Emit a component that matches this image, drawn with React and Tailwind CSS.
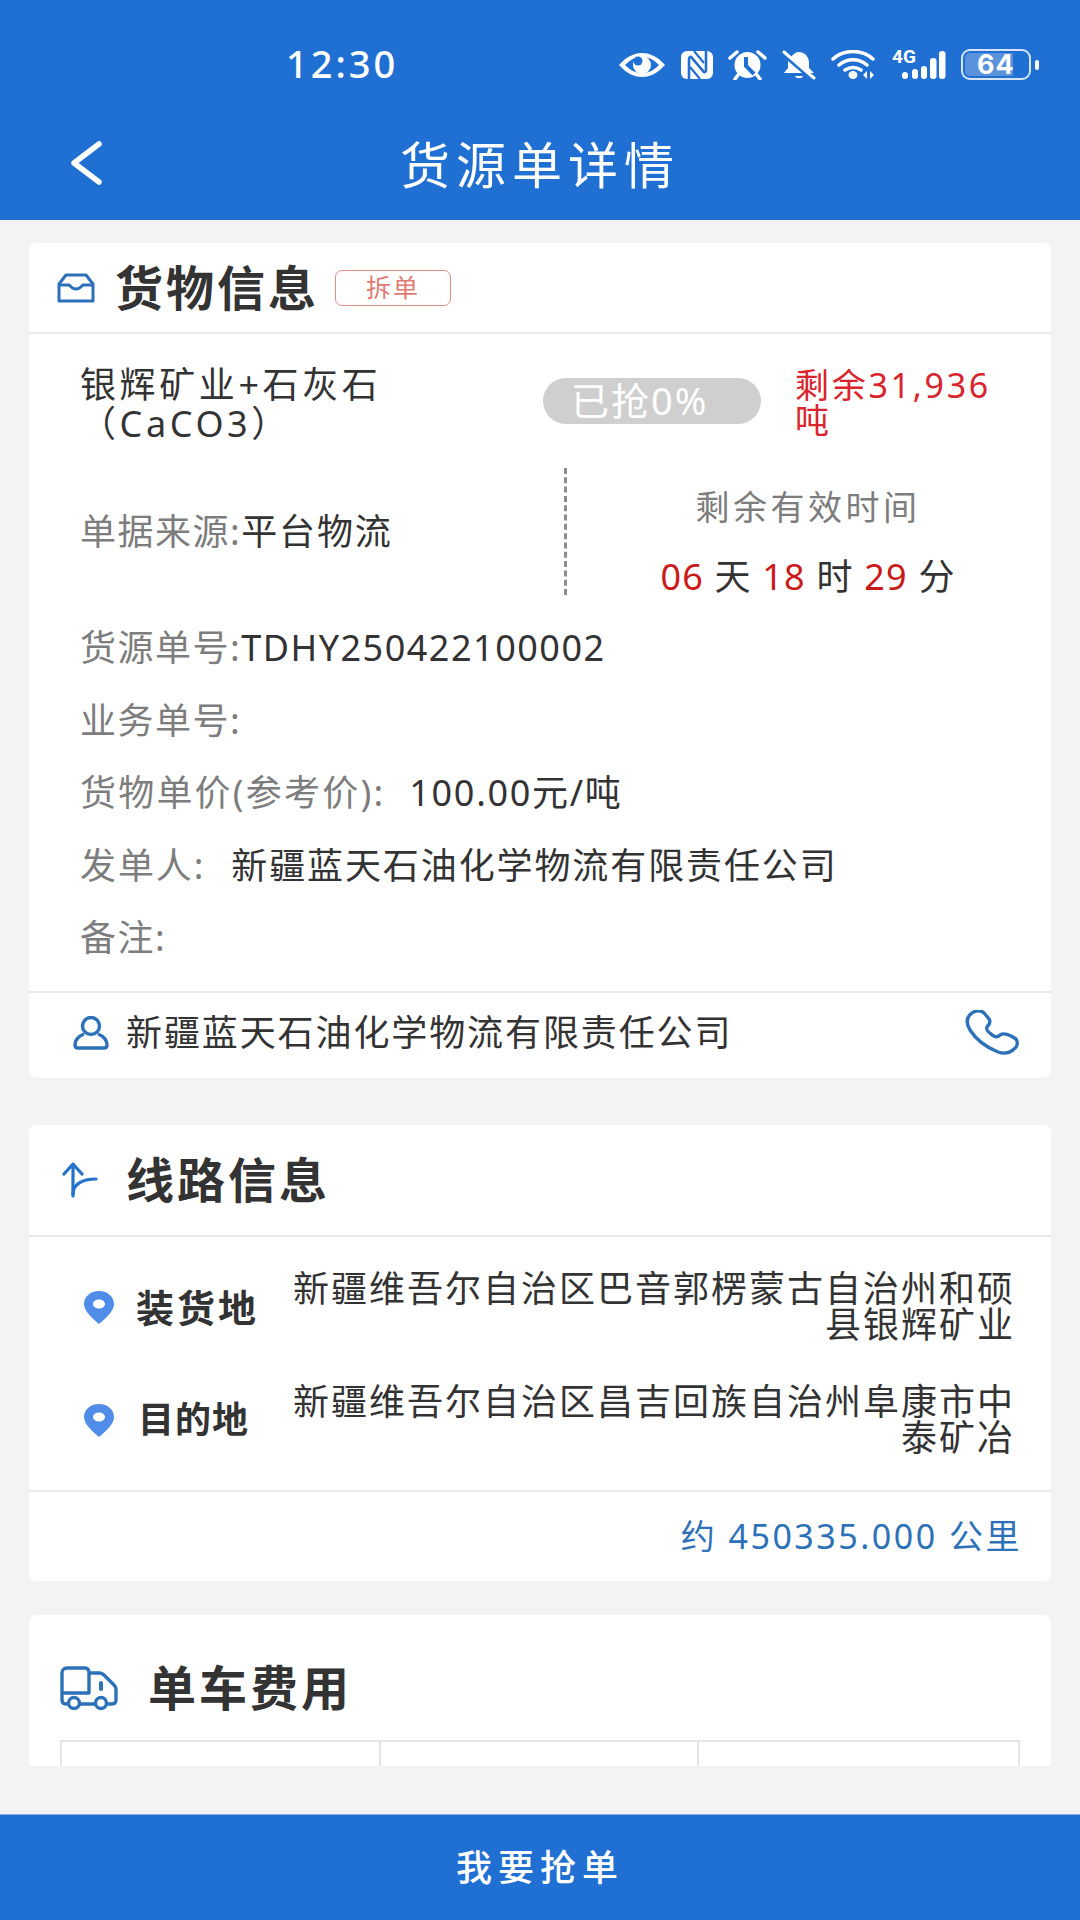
import React from 'react'

const cjk = { fontFamily: '"Noto Sans", "Noto Sans CJK SC", sans-serif' }

function Eye() {
  return (
    <svg width="48" height="26" viewBox="0 0 48 26">
      <path d="M1 13C9 4 17 1 24 1s15 3 23 12c-8 9-16 12-23 12S9 22 1 13Z" fill="#fff" />
      <path d="M7 13c6-6 11-8 17-8s11 2 17 8c-6 6-11 8-17 8S13 19 7 13Z" fill="#206fd2" />
      <circle cx="24" cy="13" r="9" fill="#fff" />
      <circle cx="20" cy="9" r="4.500" fill="#206fd2" />
    </svg>
  )
}

function Nfc() {
  return (
    <svg width="32" height="28" viewBox="0 0 32 28">
      <rect x="0" y="0" width="32" height="28" rx="6" fill="#fff" />
      <path d="M8 28V8c0-2 2-3 3-1l11 13c1 2 3 1 3-1V0" fill="none" stroke="#206fd2" strokeWidth="2.600" />
      <path d="M13 0l10 12M9 16l10 12" fill="none" stroke="#206fd2" strokeWidth="2.200" />
    </svg>
  )
}

function Alarm() {
  return (
    <svg width="39" height="30" viewBox="0 0 39 30">
      <circle cx="19.500" cy="15" r="13" fill="#fff" />
      <path d="M18 7v9l8 8" fill="none" stroke="#206fd2" strokeWidth="4" />
      <path d="M2 8l7-6M37 8l-7-6M7 29l3-4M32 29l-3-4" stroke="#fff" strokeWidth="3.500" strokeLinecap="round" />
    </svg>
  )
}

function BellOff() {
  return (
    <svg width="34" height="30" viewBox="0 0 34 30">
      <path d="M9 7c2-3 5-5 8-5 6 0 10 5 10 11v5l5 5H26ZM6 11l14 12H2l4-5Z" fill="#fff" />
      <path d="M13 26h8c-1 3-7 3-8 0Z" fill="#fff" />
      <path d="M2 2l30 26" stroke="#fff" strokeWidth="3" strokeLinecap="round" />
    </svg>
  )
}

function Wifi() {
  return (
    <svg width="46" height="30" viewBox="0 0 46 30">
      <path d="M2 9c11-10 29-10 40 0M8 15c8-7 20-7 28 0M14 20c5-3 11-3 16 0" fill="none" stroke="#fff" strokeWidth="3.500" strokeLinecap="round" />
      <ellipse cx="22" cy="25" rx="4.500" ry="4" fill="#fff" />
      <path d="M36 21v8l-4-4ZM39 21v8l4-4Z" fill="#fff" />
    </svg>
  )
}

function Signal() {
  return (
    <div className="relative w-[54px] h-[30px]">
      <span className="absolute left-0 top-[-2px] text-[19px] leading-[17px] font-bold text-white" style={{ fontFamily: 'Roboto' }}>4G</span>
      <svg width="54" height="30" viewBox="0 0 54 30" className="absolute inset-0">
        <rect x="10" y="22" width="6" height="7" rx="3" fill="#fff" />
        <rect x="20" y="19" width="6" height="10" rx="3" fill="#fff" />
        <rect x="29" y="16" width="6" height="13" rx="3" fill="#fff" />
        <rect x="38" y="8" width="6.500" height="21" rx="3" fill="#fff" />
        <rect x="47" y="1" width="6.500" height="28" rx="3" fill="#fff" />
      </svg>
    </div>
  )
}

function Battery() {
  return (
    <div className="flex items-center gap-[4px]">
      <div className="w-[70px] h-[31px] rounded-[9px] border-2 border-[#d6e4f6] p-[2px]">
        <div className="relative w-[48px] h-full rounded-l-[5px] bg-[#5a92dc]">
          <span className="absolute left-[12px] top-[-5px] text-[27px] leading-[34px] font-bold text-white tracking-[1px]" style={{ fontFamily: 'Inter' }}>64</span>
        </div>
      </div>
      <div className="w-[4px] h-[10px] rounded-full bg-white" />
    </div>
  )
}

function BoxIcon() {
  return (
    <svg width="38" height="30" viewBox="0 0 38 30" fill="none" stroke="#2d6fb8" strokeWidth="3" strokeLinejoin="round">
      <path d="M2 28V11L9 2h20l7 9v17Z" />
      <path d="M2 12h10c1 0 2 4 7 4s6-4 7-4h10" />
    </svg>
  )
}

function RouteIcon() {
  return (
    <svg width="36" height="36" viewBox="0 0 36 36" fill="none" stroke="#2472cc" strokeWidth="3.200" strokeLinecap="round" strokeLinejoin="round">
      <path d="M11 34V2M2 12l9-10 9 10" />
      <path d="M11 32c0-9 8-15 23-15" />
    </svg>
  )
}

function TruckIcon() {
  return (
    <svg width="58" height="44" viewBox="0 0 58 44" fill="none" stroke="#2d72b8" strokeWidth="3.400" strokeLinejoin="round">
      <path d="M7 38H6c-3 0-4-2-4-4V7c0-3 2-5 5-5h18c3 0 4 2 4 5v20H2" />
      <path d="M29 7h11c2 0 3 1 4 2l10 10c1 1 2 3 2 4v11c0 2-1 4-4 4h-4M18 38h17" />
      <circle cx="14" cy="37" r="5.500" />
      <circle cx="41" cy="37" r="5.500" />
      <path d="M41 17v6" strokeWidth="4" strokeLinecap="round" />
    </svg>
  )
}

function UserIcon() {
  return (
    <svg width="36" height="34" viewBox="0 0 36 34" fill="none" stroke="#2d72b8" strokeWidth="3.400">
      <circle cx="18" cy="10" r="8.500" />
      <path d="M11 18C6 20 2 24 2 29c0 2 1 3 3 3h26c2 0 3-1 3-3 0-5-4-9-9-11" strokeLinejoin="round" />
    </svg>
  )
}

function PhoneIcon() {
  return (
    <svg width="56" height="46" viewBox="0 0 56 46" fill="none" stroke="#2d72b8" strokeWidth="3.400" strokeLinejoin="round">
      <path d="M8 3c4-3 10-3 13 1l4 5c2 3 0 6-2 8-1 2 1 5 4 7 3 3 6 4 9 1 3-2 7-1 11 1l5 3c2 3 2 7-2 10-4 4-10 5-16 3C24 38 13 31 6 20 2 13 2 7 8 3Z" />
    </svg>
  )
}

function PinIcon() {
  return (
    <svg width="32" height="33" viewBox="0 0 32 33" className="shrink-0">
      <path d="M16 0c9 0 15 6 15 13 0 7-7 13-15 20C8 26 1 20 1 13 1 6 7 0 16 0Z" fill="#4f8de8" />
      <ellipse cx="16" cy="13" rx="6" ry="4.500" fill="#fff" />
    </svg>
  )
}

function InfoRow({ label, value, valueClass = '' }) {
  return (
    <div className="flex text-[36px] leading-[40px] tracking-[1.500px]">
      <span className="text-[#7d7d7d]">{label}</span>
      <span className={`text-[#333333] ${valueClass}`}>{value}</span>
    </div>
  )
}

function CardTitle({ icon, title, gap, height, children }) {
  return (
    <div className={`flex items-center border-b-2 border-[#e8e8e8] ${height}`}>
      {icon}
      <h2 className={`text-[48px] leading-[56px] font-bold tracking-[3px] text-[#333333] ${gap}`}>{title}</h2>
      {children}
    </div>
  )
}

export default function App() {
  return (
    <div className="w-[1080px] h-[1920px] flex flex-col bg-[#f3f3f3]" style={cjk}>
      {/* Header */}
      <header className="h-[220px] bg-[#206fd2] shrink-0 flex flex-col text-white">
        <div className="h-[100px] flex items-end pb-[15px] pl-[286px] pr-[41px] justify-between">
          <span className="text-[38px] leading-[44px] font-medium tracking-[3px]">12:30</span>
          <div className="flex items-center gap-[15px] pb-[5px]">
            <Eye />
            <Nfc />
            <Alarm />
            <BellOff />
            <Wifi />
            <Signal />
            <Battery />
          </div>
        </div>
        <div className="relative flex-1 flex items-center justify-center pt-[10px]">
          <svg width="36" height="44" viewBox="0 0 36 44" className="absolute left-[68px] top-[41px]" fill="none" stroke="#fff" strokeWidth="5.500" strokeLinecap="round" strokeLinejoin="round">
            <path d="M31 3 6 22l25 19" />
          </svg>
          <h1 className="text-[50px] leading-[60px] tracking-[6px] font-normal">货源单详情</h1>
        </div>
      </header>

      {/* Scrollable content */}
      <main className="h-[1546px] shrink-0 overflow-hidden px-[29px] pt-[23px]">
        {/* 货物信息 */}
        <section className="bg-white rounded-[8px] h-[835px] flex flex-col">
          <CardTitle icon={<span className="ml-[28px] flex"><BoxIcon /></span>} title="货物信息" gap="ml-[20px]" height="h-[91px]">
            <span className="ml-[16px] w-[116px] h-[36px] rounded-[7px] border border-[#dd8d88] flex items-center justify-center text-[25px] tracking-[2px] text-[#e07a73]">拆单</span>
          </CardTitle>

          <div className="flex-1 pl-[51px] pt-[31px]">
            <div className="flex h-[83px]">
              <div className="w-[463px] pr-[100px] text-[36px] leading-[39px] tracking-[3.600px] text-[#333333]">银辉矿业+石灰石（CaCO3）</div>
              <div className="w-[218px] h-[46px] mt-[13px] rounded-full bg-[#cfcfcf] text-white text-[38px] leading-[44px] pl-[28px] tracking-[2px]">已抢0%</div>
              <div className="ml-[34px] mt-[3px] w-[205px] text-[34px] leading-[35px] tracking-[2.700px] text-[#d9232d]">剩余31,936吨</div>
            </div>

            <div className="flex h-[127px] mt-[20px]">
              <div className="w-[484px] flex items-center">
                <InfoRow label="单据来源:" value="平台物流" valueClass="tracking-[1.900px]" />
              </div>
              <div className="flex-1 border-l-[3px] border-dashed border-[#8d8d8d] flex flex-col items-center pl-[30px] pr-[32px] pt-[19px]">
                <div className="text-[34px] leading-[40px] tracking-[3.500px] text-[#7d7d7d]">剩余有效时间</div>
                <div className="mt-[30px] text-[36px] leading-[40px] tracking-[1.200px] text-[#333333] whitespace-pre">
                  <span className="text-[#cc1a1a]">06</span> 天 <span className="text-[#cc1a1a]">18</span> 时 <span className="text-[#cc1a1a]">29</span> 分
                </div>
              </div>
            </div>

            <div className="flex flex-col gap-[32.500px] mt-[33px]">
              <InfoRow label="货源单号:" value="TDHY250422100002" />
              <InfoRow label="业务单号:" value="" />
              <div className="flex text-[36px] leading-[40px]">
                <span className="text-[#7d7d7d] tracking-[2.200px]">货物单价(参考价):</span>
                <span className="ml-[24px] text-[#333333] tracking-[1.700px]">100.00元/吨</span>
              </div>
              <div className="flex text-[36px] leading-[40px] tracking-[1.900px]">
                <span className="text-[#7d7d7d]">发单人:</span>
                <span className="ml-[26px] text-[#333333]">新疆蓝天石油化学物流有限责任公司</span>
              </div>
              <InfoRow label="备注:" value="" />
            </div>
          </div>

          <div className="h-[87px] border-t-2 border-[#e8e8e8] flex items-center pl-[44px] pr-[31px] pb-[6px]">
            <UserIcon />
            <span className="ml-[17px] flex-1 text-[36px] tracking-[1.900px] text-[#333333]">新疆蓝天石油化学物流有限责任公司</span>
            <PhoneIcon />
          </div>
        </section>

        {/* 线路信息 */}
        <section className="mt-[47px] bg-white rounded-[8px] h-[456px] flex flex-col">
          <CardTitle icon={<span className="ml-[33px] flex"><RouteIcon /></span>} title="线路信息" gap="ml-[28px]" height="h-[112px]" />
          <div className="flex-1 pl-[54px] pr-[36px] pt-[34px]">
            <div className="flex flex-col gap-[41px]">
              {[
                ['装货地', '新疆维吾尔自治区巴音郭楞蒙古自治州和硕县银辉矿业', 'text-[38px] tracking-[3px]'],
                ['目的地', '新疆维吾尔自治区昌吉回族自治州阜康市中泰矿冶', 'text-[36px] tracking-[1px] pl-[2px]'],
              ].map(([label, addr, size]) => (
                <div key={label} className="flex items-center">
                  <PinIcon />
                  <span className={`ml-[21px] w-[152px] shrink-0 font-bold text-[#333333] ${size}`}>{label}</span>
                  <p className="flex-1 text-right text-[36px] leading-[36px] tracking-[2px] text-[#333333]">{addr}</p>
                </div>
              ))}
            </div>
          </div>
          <div className="h-[91px] border-t-2 border-[#e8e8e8] flex items-center justify-end pr-[29px] text-[34px] tracking-[2.500px] text-[#2d72b8]">
            约 450335.000 公里
          </div>
        </section>

        {/* 单车费用 */}
        <section className="mt-[34px] bg-white rounded-t-[8px] h-[300px] px-[31px] pt-[51px]">
          <div className="flex items-center h-[44px]">
            <TruckIcon />
            <h2 className="ml-[30px] text-[48px] leading-[56px] font-bold tracking-[3px] text-[#333333]">单车费用</h2>
          </div>
          <div className="mt-[30px] grid grid-cols-3 h-[100px] border-2 border-[#e5e5e5]">
            <div className="border-r-2 border-[#e5e5e5]" />
            <div className="border-r-2 border-[#e5e5e5]" />
            <div />
          </div>
        </section>
      </main>

      {/* Footer */}
      <div className="flex-1" />
      <button className="h-[106px] shrink-0 bg-[#206fd2] border-t border-[#7fb0e8] text-white text-[36px] font-medium tracking-[6px]">我要抢单</button>
    </div>
  )
}
